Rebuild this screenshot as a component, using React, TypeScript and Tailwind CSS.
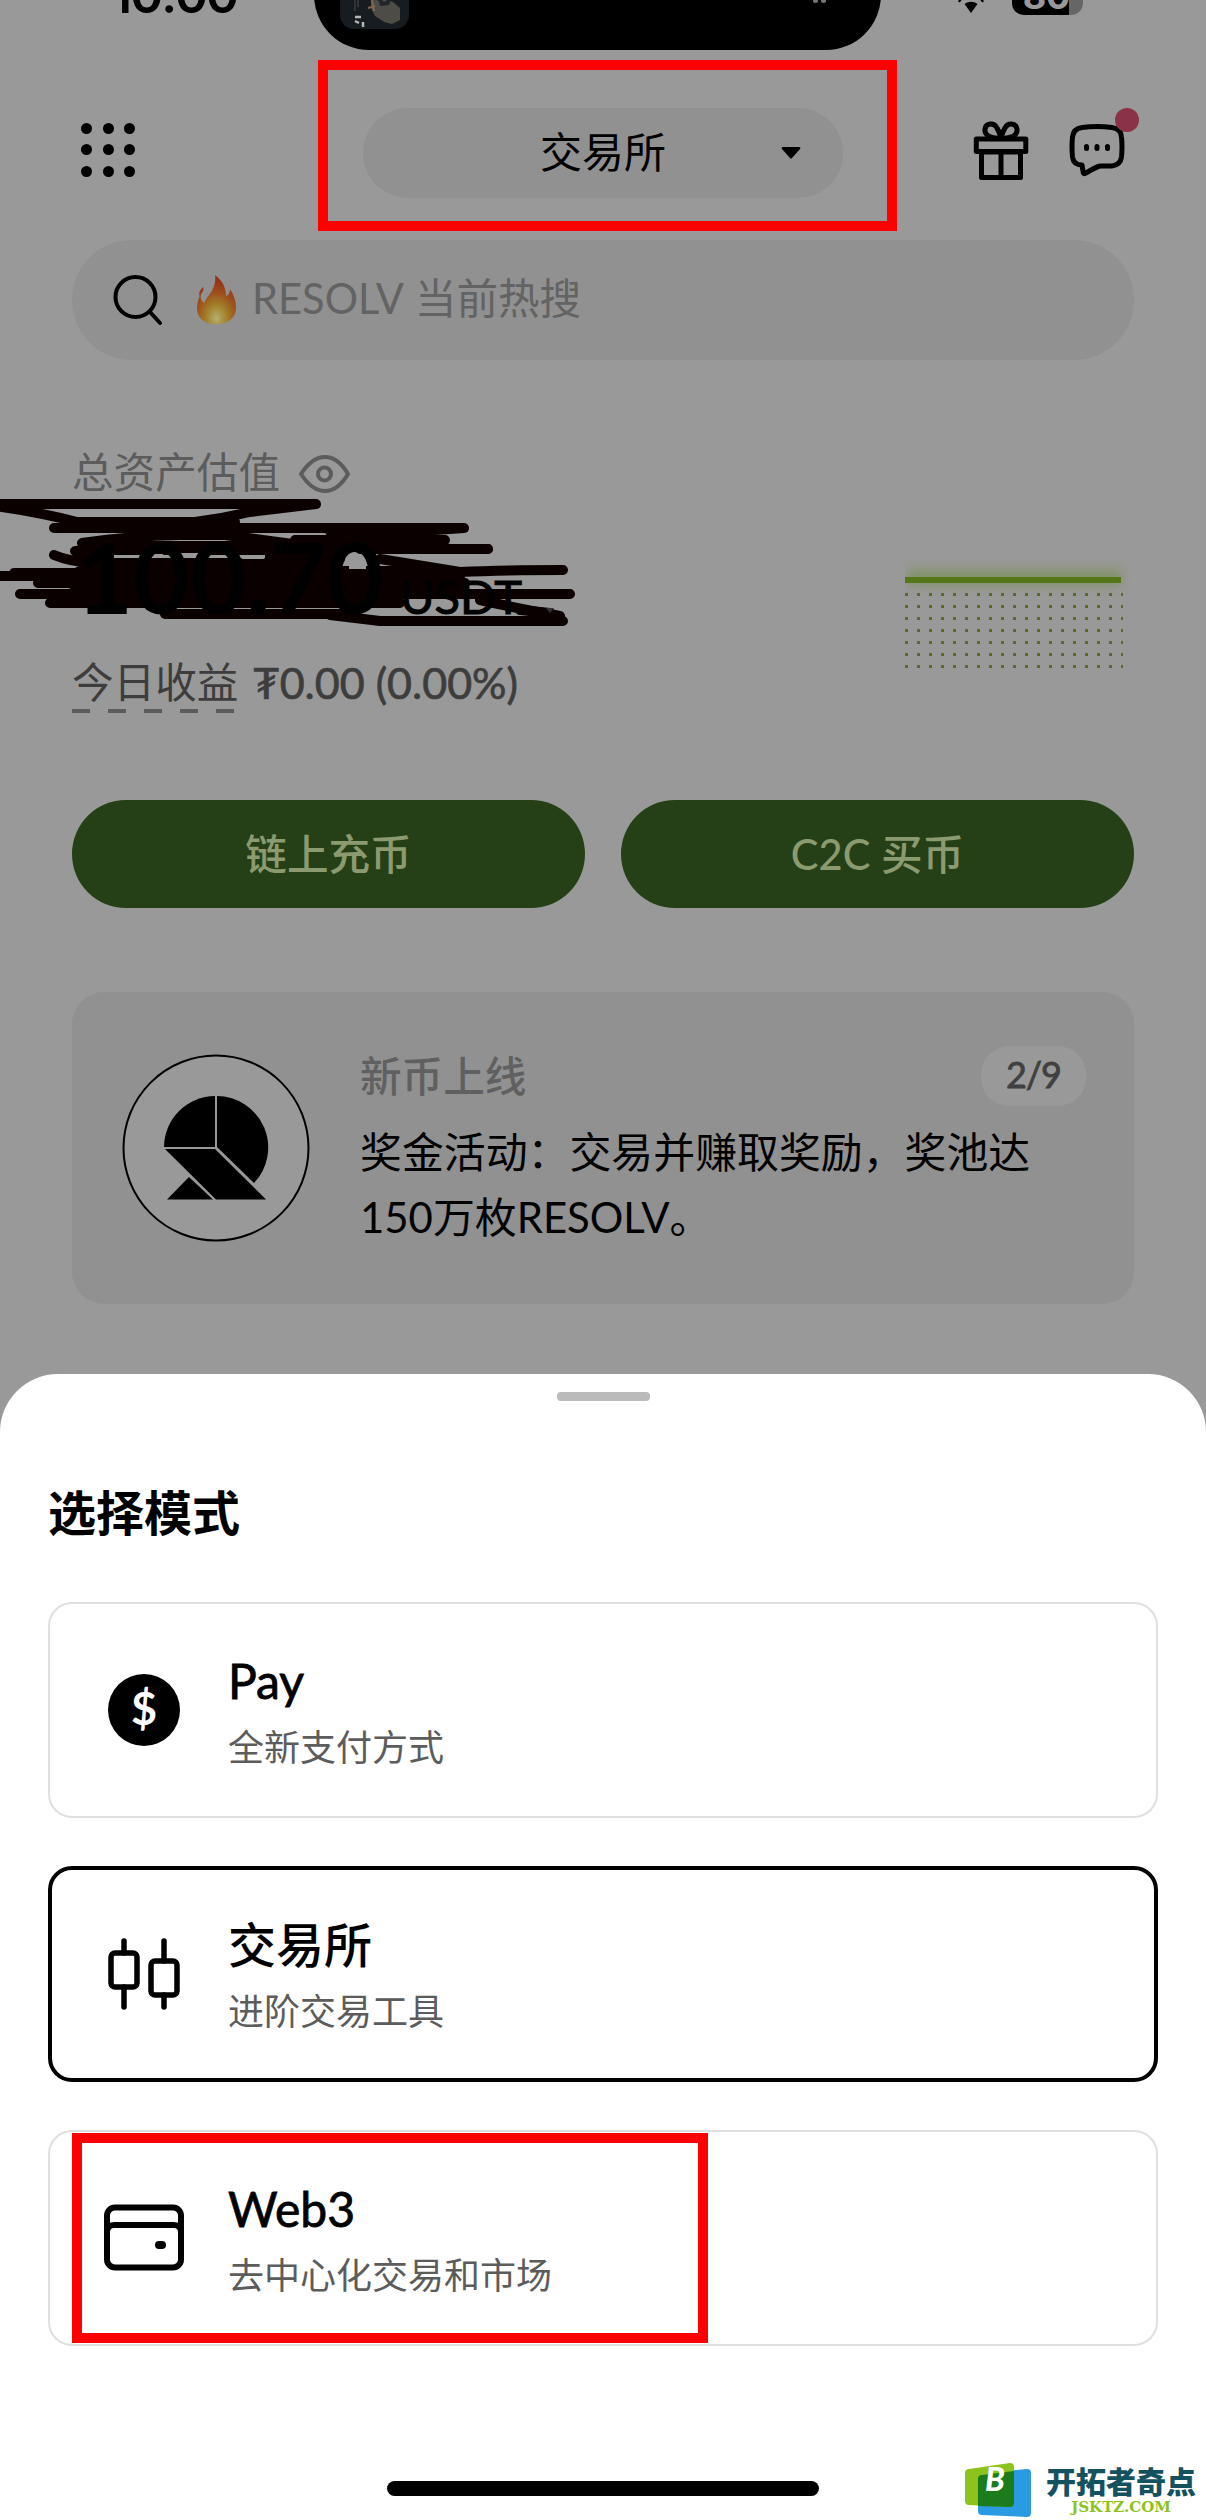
import type { ReactNode } from "react";

type Mode = {
    id: string;
    title: string;
    description: string;
    icon: ReactNode;
};

const ACTIVE_MODE = "exchange";

function StatusBar() {
    return (
        <div className="relative h-[51px] overflow-hidden">
            <div className="absolute -top-[41px] left-[111px] font-[Inter] text-[50px] leading-[72px] font-semibold tracking-[-2px]">
                10:00
            </div>
            <div className="absolute -top-[60px] left-[314px] h-[110px] w-[567px] rounded-[55px] bg-black">
                <svg
                    width="69"
                    height="69"
                    viewBox="0 0 69 69"
                    className="absolute top-5 left-[26px] rounded-[14px] bg-[#171c20]"
                >
                    <path
                        d="M31 38l8 3 6-2 8 3 7 6v12l-8 4-8-2-9-6-4-8z"
                        fill="#4d4c46"
                    />
                    <path d="M38 36l6 6 8-5-3 8-9 1z" fill="#22262a" />
                    <path
                        d="M28 48l7-2M32 40l2 11"
                        stroke="#80664f"
                        strokeWidth="2"
                    />
                    <path
                        d="M15 57h6M15 61l4 2M23 62v5"
                        stroke="#b7b7b7"
                        strokeWidth="2.500"
                    />
                    <path d="M15 39v12M18 38v9" stroke="#4a4d50" strokeWidth="1" />
                </svg>
                <div className="absolute top-[58px] left-[499px] flex gap-[3px]">
                    <span className="size-[5px] rounded-full bg-[#777]" />
                    <span className="size-[5px] rounded-full bg-[#777]" />
                </div>
            </div>
            <svg
                width="30"
                height="16"
                viewBox="0 0 30 16"
                className="absolute top-0 left-[957px]"
            >
                <path d="M7.500 4c4-3 9-3 13 0l-6.500 9z" />
                <path
                    d="M2 0l1.500 1.500M26 0l-1.500 1.500"
                    stroke="#000"
                    strokeWidth="3"
                />
            </svg>
            <div className="absolute -top-6 left-[1012px] h-[39px] w-[71px] overflow-hidden rounded-[12px] bg-[#666]">
                <div className="flex h-full w-[57px] items-center justify-center bg-black pl-3 font-[Inter] text-[36px] font-bold text-[#999]">
                    80
                </div>
            </div>
        </div>
    );
}

function TopBar() {
    return (
        <header className="mt-[9px] flex h-[171px] items-center pl-[81px]">
            <div className="grid grid-cols-3 gap-x-[10.500px] gap-y-[10.500px] pt-[8px]">
                {Array.from({ length: 9 }).map((_, i) => (
                    <span key={i} className="size-[11px] rounded-full bg-black" />
                ))}
            </div>
            <div className="ml-[183px] h-[171px] w-[579px] border-[10px] border-[#ff0000] pt-[38px] pl-[35px]">
                <div className="flex h-[90px] w-[480px] items-center rounded-full bg-[#919191] pl-[177px]">
                    <span className="-mt-[2px] text-[42px] leading-none font-normal">
                        交易所
                    </span>
                    <svg width="20" height="12" className="ml-[115px]">
                        <path d="M2 0h16q2 0 1 2l-8 9q-1 1-2 0L1 2q-1-2 1-2z" />
                    </svg>
                </div>
            </div>
            <svg
                width="56"
                height="60"
                viewBox="0 0 56 60"
                className="mt-[10px] ml-[76px]"
                fill="none"
                stroke="#000"
                strokeWidth="5"
                strokeLinejoin="round"
            >
                <rect x="3.300" y="18" width="49.500" height="12.500" />
                <path d="M8.500 31h39v25.500h-39zM28 31v25" />
                <path d="M28 17C20 18 11 15 12 8c1-6 9-7 12-1 2 3 3 6 4 10zM28 17c8 1 17-2 16-9-1-6-9-7-12-1-2 3-3 6-4 10z" />
            </svg>
            <div className="relative mt-[8px] ml-[40px]">
                <svg
                    width="56"
                    height="54"
                    viewBox="0 0 56 54"
                    fill="none"
                    stroke="#000"
                    strokeWidth="5"
                    strokeLinejoin="round"
                >
                    <path d="M13 4.500Q28 2.500 43 4.500Q52 5.500 52.500 14Q53.500 24 52.500 34Q51.500 42 43 43H31Q27 44 17 50Q14 52 14 48L13 42Q4.500 42 3.500 34Q2.500 24 3.500 14Q4.500 5.500 13 4.500z" />
                    <path
                        d="M17.500 23.500v2M28 23.500v2M38.500 23.500v2"
                        strokeLinecap="round"
                    />
                </svg>
                <span className="absolute -top-[15px] left-[46px] size-6 rounded-full bg-[#8b3346]" />
            </div>
        </header>
    );
}

function SearchBar() {
    return (
        <div className="mx-[72px] mt-[9px] flex h-[120px] items-center rounded-full bg-[#919191] pl-[41px] text-[#636363]">
            <svg
                width="52"
                height="52"
                viewBox="0 0 52 52"
                fill="none"
                stroke="#000"
                strokeWidth="4"
                strokeLinecap="round"
            >
                <circle cx="22.500" cy="23" r="20" />
                <path d="M37 38l10 11" />
            </svg>
            <svg width="40" height="50" viewBox="0 0 40 50" className="ml-[31px]">
                <defs>
                    <radialGradient id="flame" cx="50%" cy="88%" r="75%">
                        <stop offset="0" stopColor="#b5b070" />
                        <stop offset="0.35" stopColor="#a3802b" />
                        <stop offset="0.7" stopColor="#9c4f1c" />
                        <stop offset="1" stopColor="#96321c" />
                    </radialGradient>
                </defs>
                <path
                    d="M19 0c7 5 11 12 11 21 3-1 4-4 4-7 4 6 6 12 6 19 0 10-8 16-20 16S1 43 1 33c0-6 2-11 4-14-1 4 0 7 3 9C12 20 21 13 19 0zM7 12c2 4-2 6-3 10-2-4 0-7 3-10z"
                    fill="url(#flame)"
                />
            </svg>
            <span className="-mt-[2px] ml-[16px] flex gap-[11px] text-[41.600px] leading-none">
                <span>RESOLV</span>
                <span>当前热搜</span>
            </span>
        </div>
    );
}

// Marker strokes hiding the balance
function Scribble() {
    return (
        <svg
            width="600"
            height="140"
            viewBox="0 0 600 140"
            className="absolute top-0 left-0"
            fill="none"
            stroke="#0a0000"
            strokeWidth="10"
            strokeLinecap="round"
            strokeLinejoin="round"
        >
            <path d="M-5 9H316L250 17Q200 29 150 30L85 29Q40 17-5 11" />
            <path d="M67 27H235M54 33H464L420 36H330L450 54H488" />
            <path d="M82 48Q130 41 180 40H225L300 50M360 54H488" />
            <path d="M295 45H445M54 60Q70 67 95 68L75 56L200 52" />
            <path d="M14 78H340M380 64Q430 72 460 77Q500 75 563 75" />
            <path d="M-5 81H460M38 88H465" />
            <path d="M20 99H570M50 108H400M480 105Q520 114 560 121" />
            <path d="M165 119H345M330 120L380 126H563L550 118L520 115" />
            <path d="M84 53H270M88 70H330M80 78H450M88 88H460M75 98H400" strokeWidth="14" />
            <path d="M270 50H340V64H270z" fill="#0a0000" />
            <g stroke="#999" strokeWidth="4">
                <path d="M153 61h9M181 60h20M243 62h20" />
            </g>
            <path d="M349 74V67q0-2 2-2h15v9z" fill="#999" stroke="none" />
        </svg>
    );
}

function TrendChart() {
    return (
        <svg width="240" height="130" viewBox="0 0 240 130" className="mr-[61px]">
            <defs>
                <filter id="glow" x="-20%" y="-400%" width="140%" height="900%">
                    <feGaussianBlur stdDeviation="6" />
                </filter>
                <pattern id="dots" width="12" height="12" patternUnits="userSpaceOnUse">
                    <rect width="3" height="3" fill="#576d26" />
                </pattern>
            </defs>
            <rect x="2" y="25" width="214" height="15" fill="#6f8c3c" opacity="0.6" filter="url(#glow)" />
            <rect y="48" width="218" height="76" fill="url(#dots)" />
            <rect y="32" width="216" height="6" fill="#55771a" />
        </svg>
    );
}

function Assets() {
    return (
        <section className="mt-[69px]">
            <div className="ml-[72px] flex h-[66px] items-start text-[#5c5c5c]">
                <span className="mt-[23px] text-[41.600px] leading-none">总资产估值</span>
                <svg
                    width="52"
                    height="40"
                    viewBox="0 0 52 40"
                    className="mt-[25px] ml-[18px]"
                    fill="none"
                    stroke="currentColor"
                    strokeWidth="4"
                    strokeLinejoin="round"
                >
                    <path d="M3 20Q14 3 27 3T50 20Q40 37 27 37T3 20z" />
                    <circle cx="26.500" cy="20" r="6.500" />
                </svg>
            </div>
            <div className="flex h-[140px] items-start justify-between">
                <div className="relative h-[140px] w-[600px] shrink-0">
                    <Scribble />
                    <div className="relative flex items-baseline pt-[31px] pl-[76px] leading-[100px]">
                        <span className="w-[310px] text-[98px] font-bold">100.70</span>
                        <span className="ml-[14px] text-[47px] [-webkit-text-stroke:1px]">
                            USDT
                        </span>
                        <svg width="8" height="6" className="ml-6">
                            <path d="M0 0h8l-4 5z" fill="#333" />
                        </svg>
                    </div>
                </div>
                <div className="pt-[50px]">
                    <TrendChart />
                </div>
            </div>
            <div className="ml-[72px] flex items-start text-[#3d3d3d]">
                <div className="h-[54px] pt-[6px]">
                    <div className="mt-[20px] text-[41.600px] leading-[42px]">今日收益</div>
                    <div className="mt-[6px] flex gap-[18px]">
                        {Array.from({ length: 5 }).map((_, i) => (
                            <span key={i} className="h-1 w-[18px] bg-[#5c5c5c]" />
                        ))}
                    </div>
                </div>
                <span className="mt-[24px] ml-[14px] text-[43px] leading-[48px] [-webkit-text-stroke:0.7px]">
                    ₮0.00 (0.00%)
                </span>
            </div>
        </section>
    );
}

function Promo() {
    return (
        <div className="mx-[72px] mt-[84px] flex h-[312px] rounded-[32px] bg-[#919191]">
            <svg
                width="190"
                height="190"
                viewBox="0 0 190 190"
                className="mt-[61px] ml-[49px] shrink-0"
            >
                <circle cx="95" cy="95" r="92.500" fill="#999" stroke="#000" strokeWidth="2" />
                <path d="M43 94A51.500 51.500 0 0 1 94 43V94z" />
                <path d="M96 43A51.500 51.500 0 0 1 133 130L96 94z" />
                <path d="M44 96H94L145 146.500H95z" />
                <path d="M46 146.500L68 124L92 146.500z" />
            </svg>
            <div className="ml-[49px] flex-1 pt-[54px] pr-12">
                <div className="flex h-[60px] items-center justify-between">
                    <span className="text-[41.600px] font-medium text-[#606060]">
                        新币上线
                    </span>
                    <span className="flex h-[60px] w-[105px] items-center justify-center rounded-[28px] bg-[#999] pb-1 text-[36px] tracking-[-1px] text-[#404040] [-webkit-text-stroke:0.8px]">
                        2/9
                    </span>
                </div>
                <p className="mt-[14px] text-[41.900px] leading-[64.500px] whitespace-nowrap">
                    奖金活动：交易并赚取奖励，奖池达
                    <br />
                    150万枚RESOLV。
                </p>
            </div>
        </div>
    );
}

const modes: Mode[] = [
    {
        id: "pay",
        title: "Pay",
        description: "全新支付方式",
        icon: (
            <div className="flex size-[72px] items-center justify-center rounded-full bg-black pb-[2px] text-[45px] font-bold text-white">
                $
            </div>
        ),
    },
    {
        id: "exchange",
        title: "交易所",
        description: "进阶交易工具",
        icon: (
            <svg
                width="72"
                height="72"
                viewBox="0 0 72 72"
                fill="none"
                stroke="#000"
                strokeWidth="5.500"
                strokeLinecap="round"
            >
                <rect x="3" y="15" width="26" height="34" rx="4" />
                <rect x="43" y="23" width="26" height="34" rx="4" />
                <path d="M16 3v12M16 49v20M56 3v20M56 57v12" />
            </svg>
        ),
    },
    {
        id: "web3",
        title: "Web3",
        description: "去中心化交易和市场",
        icon: (
            <svg
                width="80"
                height="68"
                viewBox="0 0 80 68"
                className="shrink-0"
                fill="none"
                stroke="#000"
                strokeWidth="6"
            >
                <rect x="3" y="3.500" width="74" height="60" rx="8" />
                <path d="M3 28q0-7 7-7h60q7 0 7 7" />
                <path d="M55 41h3" strokeWidth="8" strokeLinecap="round" />
            </svg>
        ),
    },
];

function ModeCard({ mode }: { mode: Mode }) {
    const active = mode.id === ACTIVE_MODE;

    return (
        <button
            className={`relative flex h-[216px] w-full items-center rounded-[24px] text-left ${
                active ? "border-4 border-black pl-[52px]" : "border-2 border-[#e0e0e0] pl-[54px]"
            }`}
        >
            <div className="flex w-20 justify-center">{mode.icon}</div>
            <div className="ml-11 pt-2">
                <div
                    className={`text-[48px] leading-[66px] ${
                        active ? "font-medium" : "[-webkit-text-stroke:0.8px]"
                    }`}
                >
                    {mode.title}
                </div>
                <div className="text-[36px] leading-[66px] text-[#5c5c5c]">
                    {mode.description}
                </div>
            </div>
            {mode.id === "web3" && (
                <div className="absolute top-[1px] left-[22px] h-[210px] w-[636px] border-[10px] border-[#ff0000]" />
            )}
        </button>
    );
}

function Watermark() {
    return (
        <div className="absolute right-[9px] bottom-0 flex h-[65px] items-start">
            <svg width="68" height="65" viewBox="0 -8 68 65">
                <path d="M17 10L62 6q4 0 4 4v40q0 4-4 4l-45-2q-4 0-4-4V14q0-4 4-4z" fill="#2a9be3" />
                <path d="M4 6L45 0q4 0 4 4v36q0 4-4 4l-41-2q-4 0-4-4V10q0-4 4-4z" fill="#8cc31c" />
                <path d="M17 12L49 8v32q0 4-4 4l-32-1V16q0-4 4-4z" fill="#1b7c1b" />
                <text x="20" y="28" fill="#fff" fontSize="32" fontWeight="900" fontStyle="italic" fontFamily="Lato">
                    B
                </text>
            </svg>
            <div className="mt-[9px] ml-[12px] w-[152px] text-center">
                <div className="text-[30px] leading-[34px] font-black text-[#155260]">
                    开拓者奇点
                </div>
                <div className="mt-[1px] font-['DejaVu_Serif'] text-[15px] leading-[16px] font-bold text-[#8cc31c]">
                    JSKTZ.COM
                </div>
            </div>
        </div>
    );
}

export default function App() {
    return (
        <div className="relative h-[2520px] w-[1206px] overflow-hidden bg-[#999] font-[Lato,'Noto_Sans_CJK_SC',sans-serif] text-black">
            <div className="flex h-[1374px] flex-col">
                <StatusBar />
                <TopBar />
                <SearchBar />
                <Assets />
                <div className="mx-[72px] mt-[93px] grid h-[108px] shrink-0 grid-cols-2 gap-9 text-[41.600px] font-medium text-[#8c9a70]">
                    <button className="rounded-full bg-[#254016]">链上充币</button>
                    <button className="rounded-full bg-[#254016]">C2C 买币</button>
                </div>
                <Promo />
            </div>

            <div className="relative h-[1146px] bg-[#999]">
                <div className="flex h-full flex-col rounded-t-[58px] bg-white px-12">
                    <div className="mx-auto mt-[18px] h-[9px] w-[93px] rounded-[4px] bg-[#bbb]" />
                    <h2 className="mt-[77px] text-[48px] leading-[70px] font-bold">选择模式</h2>
                    <div className="mt-[54px] flex flex-col gap-12">
                        {modes.map((mode) => (
                            <ModeCard key={mode.id} mode={mode} />
                        ))}
                    </div>
                    <div className="mx-auto mt-[135px] h-[15px] w-[432px] rounded-full bg-black" />
                </div>
                <Watermark />
            </div>
        </div>
    );
}
